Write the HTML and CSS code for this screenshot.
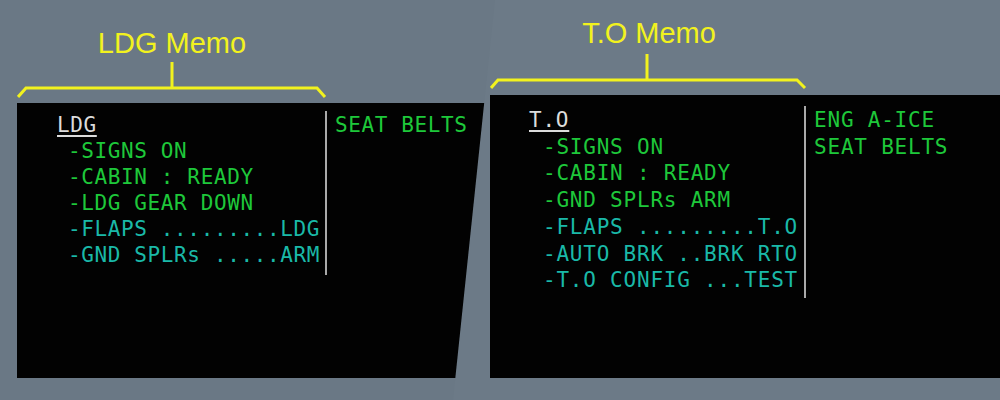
FILE: index.html
```html
<!DOCTYPE html>
<html lang="en">
<head>
    <meta charset="UTF-8">
    <meta name="viewport" content="width=device-width, initial-scale=1.0">
    <title>ECAM Memo</title>
    <link rel="stylesheet" href="styles.css">
</head>
<body>
    <main class="board">
        <!-- Landing memo -->
        <section class="pane pane-ldg">
            <div class="callout">
                <h2 class="callout-title">LDG Memo</h2>
                <svg class="bracket" width="310" height="44" viewBox="0 0 310 44">
                    <path d="M1 38 L9 29 H300 L308 38 M155 3 V29"/>
                </svg>
            </div>
            <div class="ecam">
                <div class="memo">
                    <div class="memo-title">LDG</div>
                    <ul class="memo-list">
                        <li class="done">-SIGNS ON</li>
                        <li class="done">-CABIN : READY</li>
                        <li class="done">-LDG GEAR DOWN</li>
                        <li class="todo">-FLAPS .........LDG</li>
                        <li class="todo">-GND SPLRs .....ARM</li>
                    </ul>
                </div>
                <ul class="status">
                    <li>SEAT BELTS</li>
                </ul>
            </div>
        </section>

        <!-- Takeoff memo -->
        <section class="pane pane-to">
            <div class="callout">
                <h2 class="callout-title">T.O Memo</h2>
                <svg class="bracket" width="318" height="46" viewBox="0 0 318 46">
                    <path d="M1 39 L8 31 H307 L315 39 M157 5 V31"/>
                </svg>
            </div>
            <div class="ecam">
                <div class="memo">
                    <div class="memo-title">T.O</div>
                    <ul class="memo-list">
                        <li class="done">-SIGNS ON</li>
                        <li class="done">-CABIN : READY</li>
                        <li class="done">-GND SPLRs ARM</li>
                        <li class="todo">-FLAPS .........T.O</li>
                        <li class="todo">-AUTO BRK ..BRK RTO</li>
                        <li class="todo">-T.O CONFIG ...TEST</li>
                    </ul>
                </div>
                <ul class="status">
                    <li>ENG A-ICE</li>
                    <li>SEAT BELTS</li>
                </ul>
            </div>
        </section>
    </main>
</body>
</html>
```

FILE: styles.css
```css
* {
    margin: 0;
    padding: 0;
    box-sizing: border-box;
}

body {
    font-family: 'Liberation Sans', Arial, sans-serif;
    background-color: #6a7885;
    width: 1000px;
    height: 400px;
    overflow: hidden;
}

.board {
    display: flex;
    height: 400px;
}

/* Panels */
.pane {
    display: flex;
    flex-direction: column;
    height: 400px;
    background: #6a7885;
}

.pane-ldg {
    width: 500px;
    flex-shrink: 0;
    padding: 27px 0 0 17px;
}

.pane-to {
    width: 547px;
    flex-shrink: 0;
    margin-left: -47px;
    padding: 17px 0 0 37px;
    background: #6c7a87;
    clip-path: polygon(42px 0, 100% 0, 100% 100%, 0 100%);
}

/* Yellow callouts */
.callout {
    display: flex;
    flex-direction: column;
    align-items: center;
    align-self: flex-start;
}

.callout-title {
    font-size: 29px;
    font-weight: normal;
    line-height: 32px;
    color: #f2f21e;
}

.bracket {
    display: block;
}

.bracket path {
    fill: none;
    stroke: #f2f21e;
    stroke-width: 3;
    stroke-linejoin: miter;
}

/* ECAM screen */
.ecam {
    display: flex;
    align-items: flex-start;
    background: #020202;
    font-family: 'DejaVu Sans Mono', 'Liberation Mono', monospace;
    font-size: 21px;
    letter-spacing: 0.62px;
    line-height: 26px;
}

.pane-ldg .ecam {
    height: 275px;
    padding: 8px 0 0 40px;
}

.pane-to .ecam {
    height: 283px;
    padding: 11px 0 0 39px;
    line-height: 26.7px;
    letter-spacing: 0.78px;
}

.memo {
    padding: 1px 5px 7px 0;
    border-right: 2px solid #a9a9a9;
}

.pane-to .memo {
    padding: 1px 6px 4px 0;
}

.memo-title,
.memo-list li,
.status li {
    white-space: pre;
}

.memo-title {
    color: #dcdcdc;
    text-decoration: underline;
    text-decoration-thickness: 2px;
    text-underline-offset: 3px;
}

.memo-list {
    list-style: none;
    padding-left: 11px;
}

.pane-to .memo-list {
    padding-left: 14px;
}

.memo-list .done {
    color: #1ec83a;
}

.memo-list .todo {
    color: #1ab9a8;
}

.status {
    list-style: none;
    padding: 1px 0 0 8px;
    color: #1ec83a;
}
```
